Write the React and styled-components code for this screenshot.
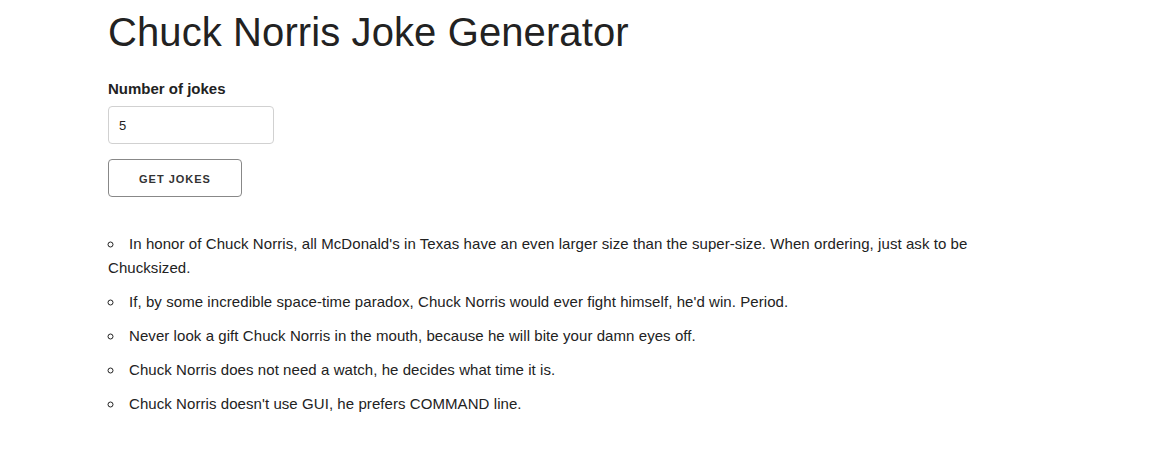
import React, { useState } from "react";
import styled, { createGlobalStyle } from "styled-components";

const GlobalStyle = createGlobalStyle`
  html, body {
    margin: 0;
    padding: 0;
    background: #fff;
  }
  body {
    font-family: "Liberation Sans", Arial, Helvetica, sans-serif;
    font-size: 15px;
    line-height: 1.6;
    color: #222;
  }
  * { box-sizing: border-box; }
`;

const Container = styled.div`
  width: 900px;
  margin-left: 108px;
  padding-top: 8px;
`;

const Title = styled.h1`
  margin: 0 0 21px;
  font-size: 40px;
  font-weight: 300;
  line-height: 1.2;
  letter-spacing: 0.1px;
`;

const Form = styled.form`
  display: flex;
  flex-direction: column;
  align-items: flex-start;
`;

const Label = styled.label`
  display: block;
  font-weight: 700;
  margin-bottom: 5px;
`;

const NumberInput = styled.input`
  width: 166px;
  height: 38px;
  padding: 6px 10px;
  border: 1px solid #d1d1d1;
  border-radius: 4px;
  font-family: inherit;
  font-size: 13px;
  color: #222;
  margin: 0 0 15px;
  outline: none;
`;

const Button = styled.button`
  height: 38px;
  padding: 0 30px;
  border: 1px solid #888;
  border-radius: 4px;
  background: transparent;
  color: #333;
  font-family: inherit;
  font-size: 11px;
  font-weight: 700;
  letter-spacing: 1px;
  text-transform: uppercase;
  line-height: 38px;
  cursor: pointer;
`;

const JokeList = styled.ul`
  margin: 35px 0 0;
  padding: 0;
  list-style: circle inside;
  line-height: 24px;
  letter-spacing: 0.07px;
`;

const Joke = styled.li`
  margin-bottom: 10px;
`;

const jokes = [
  "In honor of Chuck Norris, all McDonald's in Texas have an even larger size than the super-size. When ordering, just ask to be Chucksized.",
  "If, by some incredible space-time paradox, Chuck Norris would ever fight himself, he'd win. Period.",
  "Never look a gift Chuck Norris in the mouth, because he will bite your damn eyes off.",
  "Chuck Norris does not need a watch, he decides what time it is.",
  "Chuck Norris doesn't use GUI, he prefers COMMAND line.",
];

function App() {
  const [count, setCount] = useState("5");

  return (
    <>
      <GlobalStyle />
      <Container>
        <Title>Chuck Norris Joke Generator</Title>
        <Form onSubmit={(e) => e.preventDefault()}>
          <Label htmlFor="count">Number of jokes</Label>
          <NumberInput
            id="count"
            type="text"
            value={count}
            onChange={(e) => setCount(e.target.value)}
          />
          <Button type="submit">Get jokes</Button>
        </Form>
        <JokeList>
          {jokes.map((joke) => (
            <Joke key={joke}>{joke}</Joke>
          ))}
        </JokeList>
      </Container>
    </>
  );
}

export default App;
